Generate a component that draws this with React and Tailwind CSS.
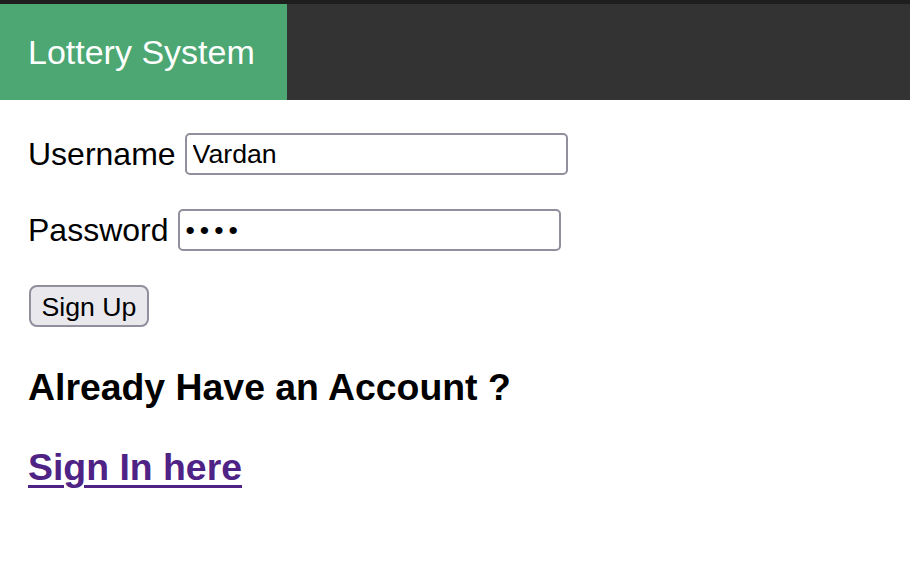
import React from "react";

const font = { fontFamily: '"Liberation Sans", Arial, sans-serif' };

const Field = ({ label, type = "text", value }) => (
  <div className="flex items-center gap-[9px] h-[42px]">
    <label className="text-[32px] text-black leading-none">{label}</label>
    <input
      type={type}
      value={value}
      readOnly
      className={
        "w-[383px] h-[42px] border-2 border-[#8f8f9d] rounded-[5px] px-[6px] text-[26.7px] text-black bg-white outline-none" +
        (type === "password" ? " tracking-[5px]" : "")
      }
      style={font}
    />
  </div>
);

export default function App() {
  return (
    <div className="w-[910px] h-[582px] bg-white overflow-hidden" style={font}>
      <div className="h-[4px] bg-[#1e1e1e]" />
      <nav className="flex h-[96px] bg-[#333333]">
        <div className="w-[287px] bg-[#4ca773] flex items-center pl-[28px] text-white text-[34px]">
          Lottery System
        </div>
      </nav>

      <main className="pl-[28px] pt-[33px] flex flex-col items-start">
        <Field label="Username" value="Vardan" />
        <div className="mt-[34px]">
          <Field label="Password" type="password" value="abcd" />
        </div>
        <button
          className="mt-[34px] ml-px w-[120px] h-[42px] bg-[#e9e9ed] border-2 border-[#8f8f9d] rounded-[8px] text-[26.7px] text-black"
          style={font}
        >
          Sign Up
        </button>
        <h3 className="mt-[39px] text-[37.4px] font-bold text-black leading-[43px]">
          Already Have an Account ?
        </h3>
        <a
          href="#"
          className="mt-[37px] text-[37.4px] font-bold text-[#4f2386] underline decoration-[3px] underline-offset-[5px] leading-[43px]"
        >
          Sign In here
        </a>
      </main>
    </div>
  );
}
